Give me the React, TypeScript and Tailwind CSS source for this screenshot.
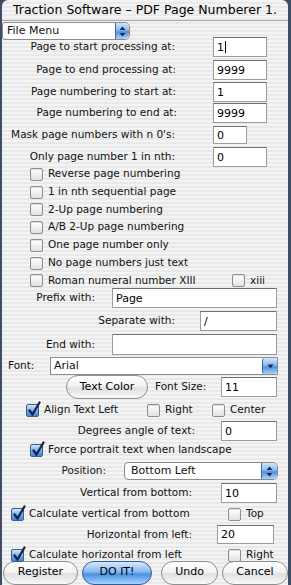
import type { ReactNode } from "react";

const stripes =
	"bg-[repeating-linear-gradient(180deg,#f4f4f4_0px,#f4f4f4_2px,#e9e9e9_2px,#e9e9e9_4px)]";

function Field({
	className,
	value,
	caret,
}: {
	className: string;
	value?: string;
	caret?: boolean;
}) {
	return (
		<div
			className={`bg-white border border-[#9c9c9c] border-t-[#6f6f6f] flex items-center pl-[3px] text-[11px] text-black leading-none ${className}`}
		>
			<span>{value}</span>
			{caret && <span className="w-px h-[12px] bg-black ml-[1px]" />}
		</div>
	);
}

function Check({ on }: { on?: boolean }) {
	if (on) {
		return (
			<span className="relative w-[13px] h-[13px] shrink-0 rounded-[2px] border border-[#3b5d8d] bg-[linear-gradient(180deg,#d3e6fa,#7db0ec_50%,#3f84db)]">
				<svg
					className="absolute -top-[4px] left-[0px]"
					width="14"
					height="16"
					viewBox="0 0 14 16"
				>
					<path
						d="M2.5 9.5 L5.5 13.5 L12.5 1.5"
						fill="none"
						stroke="#14244a"
						strokeWidth="2.3"
						strokeLinecap="round"
						strokeLinejoin="round"
					/>
				</svg>
			</span>
		);
	}
	return (
		<span className="w-[13px] h-[13px] shrink-0 rounded-[2px] border border-[#8d8d8d] bg-[linear-gradient(180deg,#ffffff,#e2e2e2)] shadow-[inset_0_1px_1px_rgba(0,0,0,0.12)]" />
	);
}

function Btn({
	className,
	blue,
	children,
}: {
	className: string;
	blue?: boolean;
	children: ReactNode;
}) {
	return (
		<div
			className={`flex items-center justify-center rounded-full border h-[24px] text-[11px] text-black shrink-0 ${
				blue
					? "border-[#2d5c9c] bg-[linear-gradient(180deg,#d7e9fc_0%,#86b8ef_45%,#4a8fe3_55%,#a8d4fb_100%)]"
					: "border-[#8f8f8f] bg-[linear-gradient(180deg,#ffffff_0%,#f3f3f3_45%,#e0e0e0_55%,#f8f8f8_100%)]"
			} ${className}`}
		>
			{children}
		</div>
	);
}

function UpDown() {
	return (
		<svg width="7" height="11" viewBox="0 0 7 11">
			<path d="M3.5 0.5 L6.5 4 L0.5 4 Z" fill="#1c2a44" />
			<path d="M3.5 10.5 L6.5 7 L0.5 7 Z" fill="#1c2a44" />
		</svg>
	);
}

function CapBlue({ className, children }: { className: string; children: ReactNode }) {
	return (
		<div
			className={`flex items-center justify-center bg-[linear-gradient(180deg,#cfe4fb_0%,#8cbcf0_45%,#4c90e2_55%,#a9d3fb_100%)] border-l border-[#3a6aa8] ${className}`}
		>
			{children}
		</div>
	);
}

function CheckRow({
	className,
	label,
	on,
}: {
	className: string;
	label: string;
	on?: boolean;
}) {
	return (
		<div className={`flex items-center gap-[5px] ${className}`}>
			<Check on={on} />
			<span className="whitespace-nowrap">{label}</span>
		</div>
	);
}

export default function App() {
	return (
		<div className="w-[291px] h-[585px] bg-[#3f4d63] overflow-hidden font-['DejaVu_Sans',sans-serif] text-[10.5px] text-[#111]">
			<div className={`ml-[2px] w-[286px] h-[585px] rounded-t-[6px] overflow-hidden flex flex-col ${stripes}`}>
				{/* title bar */}
				<div className="h-[21px] shrink-0 border-b border-[#a8a8a8] flex items-center pl-[11px] text-[12.5px] text-black whitespace-nowrap overflow-hidden">
					Traction Software – PDF Page Numberer 1.
				</div>

				{/* file menu popup */}
				<div className="mt-[1px] h-[18px] w-[128px] shrink-0 rounded-r-[5px] rounded-l-[3px] border border-[#8a8a8a] bg-white flex items-center overflow-hidden">
					<span className="pl-[4px] flex-1 text-[11px]">File Menu</span>
					<CapBlue className="w-[14px] h-full rounded-r-[5px]">
						<UpDown />
					</CapBlue>
				</div>

				<div className="-mt-[3px] h-[20px] flex items-center shrink-0">
					<span className="w-[173px] text-right">Page to start processing at:</span>
					<Field className="ml-[38px] w-[54px] h-[20px]" value="1" caret />
				</div>
				<div className="mt-[3px] h-[20px] flex items-center shrink-0">
					<span className="w-[174px] text-right">Page to end processing at:</span>
					<Field className="ml-[37px] w-[54px] h-[20px]" value="9999" />
				</div>
				<div className="mt-[2px] h-[20px] flex items-center shrink-0">
					<span className="w-[174px] text-right">Page numbering to start at:</span>
					<Field className="ml-[37px] w-[54px] h-[20px]" value="1" />
				</div>
				<div className="mt-[1px] h-[20px] flex items-center shrink-0">
					<span className="w-[175px] text-right">Page numbering to end at:</span>
					<Field className="ml-[36px] w-[54px] h-[20px]" value="9999" />
				</div>
				<div className="mt-[3px] h-[18px] flex items-center shrink-0">
					<span className="w-[173px] text-right whitespace-nowrap">Mask page numbers with n 0's:</span>
					<Field className="ml-[38px] w-[34px] h-[18px]" value="0" />
				</div>
				<div className="mt-[3px] h-[20px] flex items-center shrink-0">
					<span className="w-[173px] text-right">Only page number 1 in nth:</span>
					<Field className="ml-[38px] w-[54px] h-[20px]" value="0" />
				</div>

				<CheckRow className="-mt-[2px] h-[18px] ml-[28px] shrink-0" label="Reverse page numbering" />
				<CheckRow className="h-[18px] ml-[28px] shrink-0" label="1 in nth sequential page" />
				<CheckRow className="h-[17px] ml-[28px] shrink-0" label="2-Up page numbering" />
				<CheckRow className="h-[18px] ml-[28px] shrink-0" label="A/B 2-Up page numbering" />
				<CheckRow className="h-[18px] ml-[28px] shrink-0" label="One page number only" />
				<CheckRow className="h-[18px] ml-[28px] shrink-0" label="No page numbers just text" />
				<div className="h-[17px] flex items-center shrink-0">
					<CheckRow className="ml-[28px] w-[202px]" label="Roman numeral number XIII" />
					<CheckRow className="" label="xiii" />
				</div>

				<div className="-mt-[1px] h-[20px] flex items-center shrink-0">
					<span className="w-[93px] text-right">Prefix with:</span>
					<Field className="ml-[17px] w-[165px] h-[20px]" value="Page" />
				</div>
				<div className="mt-[3px] h-[20px] flex items-center shrink-0">
					<span className="w-[173px] text-right">Separate with:</span>
					<Field className="ml-[25px] w-[77px] h-[20px]" value="/" />
				</div>
				<div className="mt-[3px] h-[21px] flex items-center shrink-0">
					<span className="w-[93px] text-right">End with:</span>
					<Field className="ml-[17px] w-[165px] h-[21px]" />
				</div>
				<div className="mt-[2px] h-[18px] flex items-center shrink-0">
					<span className="w-[48px] pl-[6px]">Font:</span>
					<div className="w-[228px] h-[18px] bg-white border border-[#8e8e8e] flex items-center">
						<span className="flex-1 pl-[3px] text-[11px]">Arial</span>
						<CapBlue className="w-[15px] h-[16px] rounded-[3px]">
							<svg width="7" height="5" viewBox="0 0 7 5">
								<path d="M0.5 0.5 L6.5 0.5 L3.5 4.5 Z" fill="#1c2a44" />
							</svg>
						</CapBlue>
					</div>
				</div>

				<div className="mt-[2px] h-[20px] flex items-center shrink-0">
					<Btn className="ml-[64px] w-[82px] h-[18px]">Text Color</Btn>
					<span className="ml-[7px] w-[66px]">Font Size:</span>
					<Field className="w-[56px] h-[20px]" value="11" />
				</div>

				<div className="mt-[5px] h-[16px] flex items-center shrink-0">
					<CheckRow className="ml-[24px] w-[121px]" label="Align Text Left" on />
					<CheckRow className="w-[65px]" label="Right" />
					<CheckRow className="" label="Center" />
				</div>

				<div className="mt-[3px] h-[20px] flex items-center shrink-0">
					<span className="w-[193px] text-right">Degrees angle of text:</span>
					<Field className="ml-[26px] w-[56px] h-[20px]" value="0" />
				</div>

				<CheckRow className="mt-[1px] h-[16px] ml-[28px] shrink-0" label="Force portrait text when landscape" on />

				<div className="mt-[4px] h-[18px] flex items-center shrink-0">
					<span className="w-[104px] text-right">Position:</span>
					<div className="ml-[18px] w-[154px] h-[18px] rounded-r-[5px] rounded-l-[4px] border border-[#8a8a8a] bg-white flex items-center overflow-hidden">
						<span className="flex-1 pl-[6px] text-[11px]">Bottom Left</span>
						<CapBlue className="w-[16px] h-full rounded-r-[5px]">
							<UpDown />
						</CapBlue>
					</div>
				</div>

				<div className="mt-[3px] h-[20px] flex items-center shrink-0">
					<span className="w-[190px] text-right">Vertical from bottom:</span>
					<Field className="ml-[29px] w-[56px] h-[20px]" value="10" />
				</div>

				<div className="mt-[3px] h-[16px] flex items-center shrink-0">
					<CheckRow className="ml-[9px] w-[217px]" label="Calculate vertical from bottom" on />
					<CheckRow className="" label="Top" />
				</div>

				<div className="mt-[3px] h-[19px] flex items-center shrink-0">
					<span className="w-[190px] text-right">Horizontal from left:</span>
					<Field className="ml-[25px] w-[57px] h-[19px]" value="20" />
				</div>

				<div className="mt-[3px] h-[16px] flex items-center shrink-0">
					<CheckRow className="ml-[9px] w-[217px]" label="Calculate horizontal from left" on />
					<CheckRow className="" label="Right" />
				</div>

				<div className="-mt-[3px] h-[25px] flex items-center shrink-0">
					<Btn className="ml-[1px] w-[75px]">Register</Btn>
					<Btn className="ml-[4px] w-[70px]" blue>
						DO IT!
					</Btn>
					<Btn className="ml-[9px] w-[57px]">Undo</Btn>
					<Btn className="ml-[4px] w-[66px]">Cancel</Btn>
				</div>
			</div>
		</div>
	);
}
